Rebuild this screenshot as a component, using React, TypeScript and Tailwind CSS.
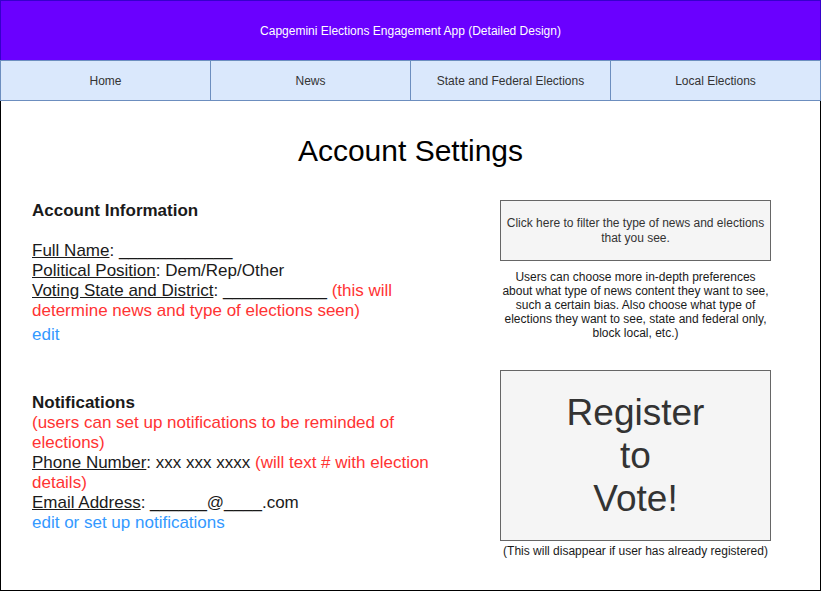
import React from "react";

const navItems = ["Home", "News", "State and Federal Elections", "Local Elections"];

export default function App() {
  return (
    <div className="w-[821px] h-[591px] bg-white font-['Liberation_Sans',Arial,sans-serif]">
      {/* HEADER */}
      <div className="h-[60px] border-t border-x border-[#3700cc] bg-[#6a00ff] flex items-center justify-center">
        <span className="text-[12px] text-white">Capgemini Elections Engagement App (Detailed Design)</span>
      </div>

      {/* NAV */}
      <div className="flex h-[41px] border border-[#6c8ebf] bg-[#dae8fc] text-[12px] text-[#333]">
        {navItems.map((item, i) => (
          <div
            key={item}
            className={
              i === 0
                ? "w-[210px] border-r border-[#6c8ebf] flex items-center justify-center"
                : i < 3
                ? "w-[200px] border-r border-[#6c8ebf] flex items-center justify-center"
                : "flex-1 flex items-center justify-center"
            }
          >
            {item}
          </div>
        ))}
      </div>

      {/* BODY */}
      <div className="h-[490px] border-x border-b border-black pt-[32px]">
        <h1 className="text-center text-[30px] leading-[36px] text-black">Account Settings</h1>

        <div className="mt-[31px] flex">
          {/* LEFT */}
          <div className="ml-[31px] w-[430px] pt-[1px] text-[17px] leading-[20px] text-[#1a1a1a]">
            <p className="font-bold">Account Information</p>
            <p className="mt-[20px]">
              <span className="underline">Full Name</span>: ____________
            </p>
            <p>
              <span className="underline">Political Position</span>: Dem/Rep/Other
            </p>
            <p>
              <span className="underline">Voting State and District</span>: ___________{" "}
              <span className="text-[#ff3333]">(this will determine news and type of elections seen)</span>
            </p>
            <p className="mt-[4px] text-[#3399ff]">edit</p>

            <p className="mt-[48px] font-bold">Notifications</p>
            <p className="text-[#ff3333]">(users can set up notifications to be reminded of elections)</p>
            <p>
              <span className="underline">Phone Number</span>: xxx xxx xxxx{" "}
              <span className="text-[#ff3333]">(will text # with election details)</span>
            </p>
            <p>
              <span className="underline">Email Address</span>: ______@____.com
            </p>
            <p className="text-[#3399ff]">edit or set up notifications</p>
          </div>

          {/* RIGHT */}
          <div className="ml-[38px] w-[271px] flex flex-col items-center text-[#333]">
            <div className="w-[271px] h-[61px] border border-[#666] bg-[#f5f5f5] flex items-center justify-center text-center text-[12px] leading-[15px]">
              Click here to filter the type of news and elections that you see.
            </div>
            <p className="mt-[9px] w-[268px] text-center text-[12px] leading-[14px] text-[#1a1a1a]">
              Users can choose more in-depth preferences about what type of news content they want to see, such a certain bias. Also choose what type of elections they want to see, state and federal only, block local, etc.)
            </p>
            <div className="mt-[30px] w-[271px] h-[171px] border border-[#666] bg-[#f5f5f5] flex flex-col items-center justify-center text-center text-[37px] leading-[43px]">
              <span>Register</span>
              <span>to</span>
              <span>Vote!</span>
            </div>
            <p className="mt-[3px] text-center text-[12px] leading-[14px] text-[#1a1a1a]">
              (This will disappear if user has already registered)
            </p>
          </div>
        </div>
      </div>
    </div>
  );
}
